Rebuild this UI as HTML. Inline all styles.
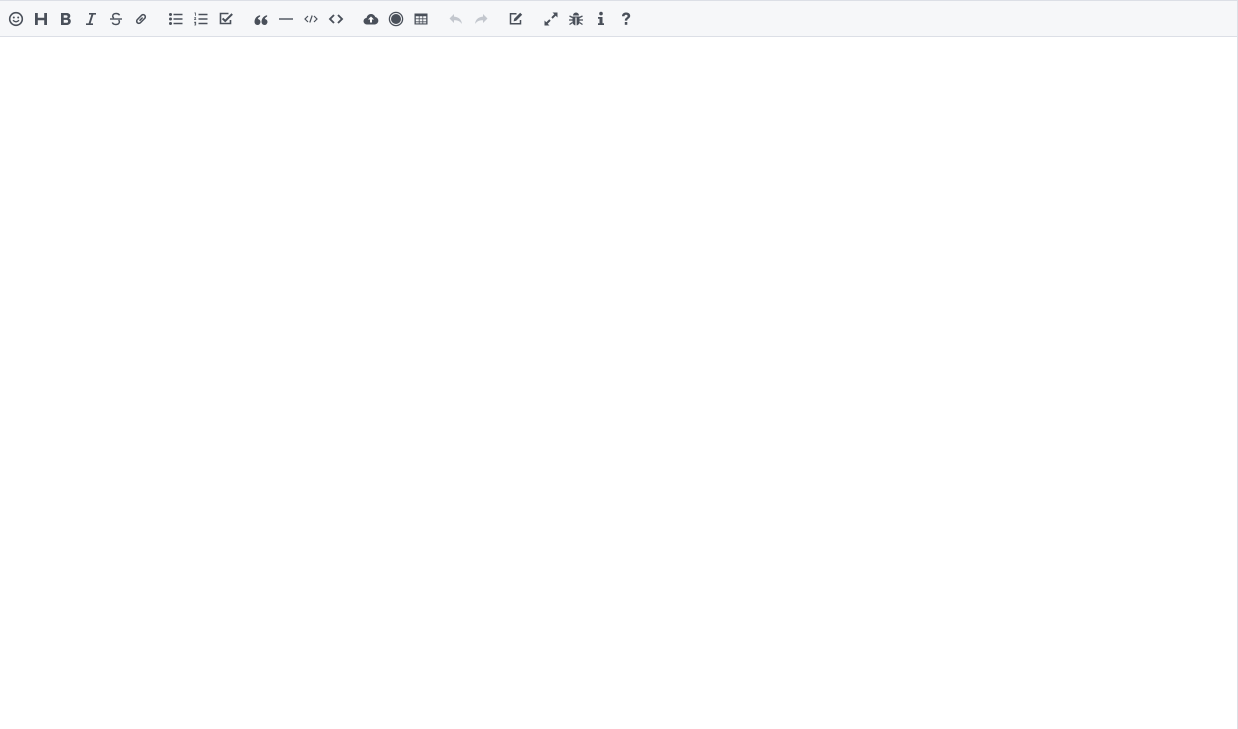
<!DOCTYPE html>
<html><head><meta charset="utf-8"><style>
html,body{margin:0;padding:0;background:#fff;width:1238px;height:729px;overflow:hidden}
.wrap{position:absolute;left:0;top:0;width:1237px;height:729px;border-right:1px solid #dcdfe6}
.bar{position:absolute;left:0;top:0;width:1237px;height:35px;background:#f6f7f9;border-top:1px solid #dcdfe6;border-bottom:1px solid #dcdfe6}
svg{position:absolute;top:10px;width:16px;height:16px;fill:#4a505a;stroke:none}
.d{fill:#c3c7ce}
</style></head><body><div class="wrap"><div class="bar">
<!-- smile -->
<svg style="left:8px" viewBox="0 0 16 16"><circle cx="8" cy="8" r="6.3" fill="none" stroke="#4a505a" stroke-width="1.6"/><circle cx="5.8" cy="6.5" r="1"/><circle cx="10.2" cy="6.5" r="1"/><path d="M5 9.3q3 3 6 0" fill="none" stroke="#4a505a" stroke-width="1.4"/></svg>
<!-- H -->
<svg style="left:33px" viewBox="0 0 16 16"><path d="M2 2h2.8v4.8h6.4V2H14v12h-2.8V9.2H4.8V14H2z"/></svg>
<!-- B -->
<svg style="left:58px" viewBox="0 0 16 16"><path d="M3 2h5.5c2.5 0 3.8 1.2 3.8 3 0 1.2-.7 2-1.6 2.4 1.3.3 2.1 1.3 2.1 2.7 0 2.2-1.6 3.9-4.3 3.9H3zm2.7 2.2v2.6h2.4c1 0 1.5-.5 1.5-1.3s-.5-1.3-1.5-1.3zm0 4.7v2.9h2.7c1.1 0 1.7-.5 1.7-1.45s-.6-1.45-1.7-1.45z"/></svg>
<!-- I -->
<svg style="left:83px" viewBox="0 0 16 16"><path d="M6 2h7v1.6h-2.6L7.6 12.4H10V14H3v-1.6h2.6l2.8-8.8H6z"/></svg>
<!-- S -->
<svg style="left:108px" viewBox="0 0 16 16"><path d="M2 7.3h12v1.4H2z"/><path d="M11.5 4.3C11 3.2 9.8 2.5 8 2.5 6 2.5 4.7 3.5 4.7 5c0 .9.4 1.6 1.2 2.1M10.6 9c.5.5.8 1 .8 1.8 0 1.6-1.4 2.7-3.5 2.7-1.9 0-3.1-.8-3.6-2" fill="none" stroke="#4a505a" stroke-width="1.5"/></svg>
<!-- link -->
<svg style="left:133px" viewBox="0 0 16 16"><path d="M7 9.2l2.2-2.2M6.5 6.4l-2.3 2.3a2.2 2.2 0 0 0 3.1 3.1l2.3-2.3M9.5 9.6l2.3-2.3a2.2 2.2 0 0 0-3.1-3.1L6.4 6.5" fill="none" stroke="#4a505a" stroke-width="1.5" stroke-linecap="round"/></svg>
<!-- ul -->
<svg style="left:168px" viewBox="0 0 16 16"><circle cx="2.5" cy="3.5" r="1.5"/><circle cx="2.5" cy="8" r="1.5"/><circle cx="2.5" cy="12.5" r="1.5"/><path d="M5.5 2.7h9v1.6h-9zM5.5 7.2h9v1.6h-9zM5.5 11.7h9v1.6h-9z"/></svg>
<!-- ol -->
<svg style="left:193px" viewBox="0 0 16 16"><path d="M1.5 1.5h1.3v3.2H2V2.4h-.5zM1.3 6.3h1.8v.7l-1 1.2h1.1V9H1.2v-.7l1-1.2h-.9zM1.3 10.8h1.8v3.6H1.3v-.6h1v-.5h-.7v-.6h.7v-.4h-1z"/><path d="M5.5 2.7h9v1.5h-9zM5.5 7.2h9v1.5h-9zM5.5 11.7h9v1.5h-9z"/></svg>
<!-- checkbox -->
<svg style="left:218px" viewBox="0 0 16 16"><path d="M12.5 9v3.5h-10v-10h8" fill="none" stroke="#4a505a" stroke-width="1.6"/><path d="M4.6 7.4l2.6 2.6 7-7" fill="none" stroke="#4a505a" stroke-width="2"/></svg>
<!-- quote -->
<svg style="left:253px" viewBox="0 0 16 16"><path d="M1.5 11a3 3 0 1 0 3.3-3 3.5 3.5 0 0 1 2.3-2.4V4.2C4 4.6 1.5 7.2 1.5 11zM8.5 11a3 3 0 1 0 3.3-3 3.5 3.5 0 0 1 2.3-2.4V4.2C11 4.6 8.5 7.2 8.5 11z"/></svg>
<!-- hr -->
<svg style="left:278px" viewBox="0 0 16 16"><path d="M1 7.3h14v1.4H1z"/></svg>
<!-- code small -->
<svg style="left:303px" viewBox="0 0 16 16"><path d="M5 5L2 8l3 3M11 5l3 3-3 3M9.2 4.5l-2.4 7" fill="none" stroke="#4a505a" stroke-width="1.2"/></svg>
<!-- code -->
<svg style="left:328px" viewBox="0 0 16 16"><path d="M6 4L2 8l4 4M10 4l4 4-4 4" fill="none" stroke="#4a505a" stroke-width="1.9"/></svg>
<!-- cloud upload -->
<svg style="left:363px" viewBox="0 0 16 16"><path d="M4 13.5a3.3 3.3 0 0 1-.4-6.6 4.5 4.5 0 0 1 8.7-.9 3.8 3.8 0 0 1-.3 7.5zM8 5.5l-3 3h2v3h2v-3h2z"/><path d="M8 5.8l-2.6 2.6h1.8v2.9h1.6V8.4h1.8z" fill="#fff"/></svg>
<!-- record -->
<svg style="left:388px" viewBox="0 0 16 16"><circle cx="8" cy="8" r="6.6" fill="none" stroke="#4a505a" stroke-width="1.3"/><circle cx="8" cy="8" r="5"/></svg>
<!-- table -->
<svg style="left:413px" viewBox="0 0 16 16"><path d="M1.5 2.5h13v11h-13z"/><path d="M2.8 5.2h3v2.2h-3zM6.6 5.2h2.8v2.2H6.6zM10.2 5.2h3v2.2h-3zM2.8 8.2h3v2.2h-3zM6.6 8.2h2.8v2.2H6.6zM10.2 8.2h3v2.2h-3zM2.8 11.2h3v1.2h-3zM6.6 11.2h2.8v1.2H6.6zM10.2 11.2h3v1.2h-3z" fill="#f6f7f9"/></svg>
<!-- undo -->
<svg style="left:448px" viewBox="0 0 16 16"><path class="d" d="M6 3L1.5 7.5 6 12V9.2c3.5 0 6 .8 8 3.8-.5-4.3-3-7-8-7.4z"/></svg>
<!-- redo -->
<svg style="left:473px" viewBox="0 0 16 16"><path class="d" d="M10 3l4.5 4.5L10 12V9.2c-3.5 0-6 .8-8 3.8.5-4.3 3-7 8-7.4z"/></svg>
<!-- edit -->
<svg style="left:508px" viewBox="0 0 16 16"><path d="M12.5 9v3.8h-10v-10h6" fill="none" stroke="#4a505a" stroke-width="1.5"/><path d="M12.2 1.8l2 2-6 6-2.6.6.6-2.6z"/></svg>
<!-- expand -->
<svg style="left:543px" viewBox="0 0 16 16"><path d="M9.5 1.5h5v5l-1.8-1.8-3 3-1.4-1.4 3-3zM6.5 14.5h-5v-5l1.8 1.8 3-3 1.4 1.4-3 3z"/></svg>
<!-- bug -->
<svg style="left:568px" viewBox="0 0 16 16"><path d="M5 4.5a3 3 0 0 1 6 0zM4.5 5.5h7V11a3.5 3.5 0 0 1-7 0z"/><path d="M1.5 5l3 1.5M14.5 5l-3 1.5M1 9h3.5M15 9h-3.5M1.5 13.5l3-2M14.5 13.5l-3-2" stroke="#4a505a" stroke-width="1.3"/><path d="M7.4 6.5h1.2v8H7.4z" fill="#f6f7f9"/></svg>
<!-- info -->
<svg style="left:593px" viewBox="0 0 16 16"><circle cx="8" cy="2.6" r="1.8"/><path d="M5 6h4.5v6.3H11V14H5v-1.7h1.5V7.7H5z"/></svg>
<!-- question -->
<svg style="left:618px" viewBox="0 0 16 16"><path d="M4 5.2C4 2.8 5.8 1.5 8.1 1.5c2.4 0 4.1 1.3 4.1 3.4 0 2.5-3 2.8-3 4.7H6.8c0-2.9 2.8-3 2.8-4.6 0-.8-.6-1.3-1.5-1.3-1 0-1.6.6-1.6 1.5z"/><rect x="6.8" y="11" width="2.5" height="2.8"/></svg>
</div></div></body></html>
